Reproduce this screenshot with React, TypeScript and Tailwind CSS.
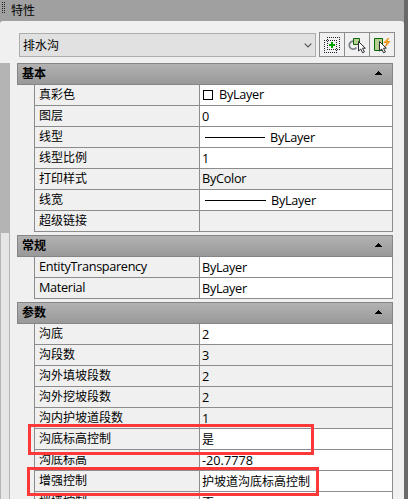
import type { ReactNode } from "react";

const LATIN = "text-[12.7px] font-['Open_Sans','Noto_Sans_CJK_SC',sans-serif]";

type Kind = "white" | "gray";
interface Item {
  label: string;
  value: string;
  kind?: Kind;
  latin?: boolean;
  cjk?: boolean;
  mark?: "box" | "line" | "longline";
}

function Row({ label, value, kind = "white", latin, cjk, mark }: Item) {
  const isWord = value.startsWith("By");
  return (
    <div className="flex h-[21px] shrink-0 border-b border-[#8c8c8c]">
      <div className="flex w-[166px] shrink-0 items-center border-x border-[#8c8c8c] pb-[2px] pl-1 leading-5">
        <span className={latin ? `${LATIN} tracking-[-0.33px]` : ""}>{label}</span>
      </div>
      <div
        className={`flex grow items-center border-r border-[#8c8c8c] pl-[2px] leading-5 ${
          kind === "white" ? "bg-white" : "bg-[#f0f0f0] pb-[2px]"
        } ${kind === "gray" && !isWord ? "pt-[2px]" : ""}`}
      >
        {mark === "box" && <span className="mr-[6px] ml-px size-[10px] border border-black" />}
        {mark === "line" && <span className="mr-[5px] ml-[3px] h-px w-[60px] bg-black" />}
        {mark === "longline" && <span className="mr-[5px] ml-[3px] h-px w-[61px] bg-black" />}
        <span
          className={`${cjk ? "" : LATIN} ${isWord ? "tracking-[-0.3px]" : ""} ${mark === "box" ? "pb-[2px]" : ""}`}
        >
          {value}
        </span>
      </div>
    </div>
  );
}

function Section({ title, items, className = "" }: { title: string; items: Item[]; className?: string }) {
  return (
    <section className={`shrink-0 ${className}`}>
      <header className="flex h-[22px] items-center justify-between border border-[#858585] bg-linear-to-b from-[#b2b2b2] to-[#999999] pr-[10px] pb-[2px] pl-1 font-bold">
        <span>{title}</span>
        <svg width="7" height="4" viewBox="0 0 7 4" shapeRendering="crispEdges">
          <path d="M3 0h1v1h1v1h1v1h1v1H0V3h1V2h1V1h1z" />
        </svg>
      </header>
      <div className="pl-[17px]">
        {items.map((item) => (
          <Row key={item.label} {...item} />
        ))}
      </div>
    </section>
  );
}

function ToolButton({ children, first = false }: { children: ReactNode; first?: boolean }) {
  return (
    <button
      className={`flex h-[25px] items-center justify-center border-y border-r border-[#8c8c8c] ${
        first ? "w-[26px] border-l" : "w-[25px]"
      }`}
    >
      {children}
    </button>
  );
}

function Cursor({ x, y }: { x: number; y: number }) {
  return (
    <path
      transform={`translate(${x} ${y})`}
      d="M.5.5v9.5l2.2-2 1.9 3.8 1.8-.9-1.9-3.7h2.8z"
      fill="#fff"
      stroke="#2b2b33"
    />
  );
}

function SelectIcon() {
  return (
    <svg width="24" height="23" viewBox="0 0 24 23" shapeRendering="crispEdges">
      <g fill="none" stroke="#223" strokeDasharray="1 1">
        <path d="M7 4.5h13M7 16.5h13M4 7.5h13M4 19.5h13" />
        <path d="M7.5 4v13M19.5 4v13M4.5 7v13M16.5 7v13" />
      </g>
      <path d="M11 9h2v2h2v2h-2v2h-2v-2H9v-2h2z" fill="#00a000" />
    </svg>
  );
}

function PickIcon() {
  return (
    <svg width="24" height="23" viewBox="0 0 24 23">
      <path d="M8 8.2a4 4 0 1 0 3.5 6.3" fill="none" stroke="#7c8288" strokeWidth="1.8" />
      <path d="M8.5 5.5h6v6h-6z" fill="#b8cf94" stroke="#0f640f" />
      <Cursor x={13} y={8} />
    </svg>
  );
}

function QuickIcon() {
  return (
    <svg width="24" height="23" viewBox="0 0 24 23">
      <path d="M4.5 5.5h8v12h-8z" fill="#b8cf94" stroke="#006b00" />
      <path d="M18.5 5L14 9.5h3.2l-1.7 4 4.3-5h-3z" fill="#ffc64a" stroke="#e98200" strokeWidth=".9" />
      <Cursor x={9} y={8} />
    </svg>
  );
}

const basic: Item[] = [
  { label: "真彩色", value: "ByLayer", mark: "box" },
  { label: "图层", value: "0" },
  { label: "线型", value: "ByLayer", mark: "line" },
  { label: "线型比例", value: "1" },
  { label: "打印样式", value: "ByColor", kind: "gray" },
  { label: "线宽", value: "ByLayer", mark: "longline" },
  { label: "超级链接", value: "", kind: "gray" },
];

const general: Item[] = [
  { label: "EntityTransparency", value: "ByLayer", latin: true },
  { label: "Material", value: "ByLayer", latin: true },
];

const params: Item[] = [
  { label: "沟底", value: "2" },
  { label: "沟段数", value: "3", kind: "gray" },
  { label: "沟外填坡段数", value: "2", kind: "gray" },
  { label: "沟外挖坡段数", value: "2", kind: "gray" },
  { label: "沟内护坡道段数", value: "1", kind: "gray" },
  { label: "沟底标高控制", value: "是", cjk: true },
  { label: "沟底标高", value: "-20.7778" },
  { label: "增强控制", value: "护坡道沟底标高控制", cjk: true },
  { label: "挡墙控制", value: "否", cjk: true },
];

export default function App() {
  return (
    <div className="relative flex h-[499px] w-[408px] overflow-hidden bg-[#a0a0a0] font-['Noto_Sans_CJK_SC',sans-serif] text-[12px] leading-5 text-black">
      <div className="flex w-[404px] shrink-0 flex-col">
        <div className="flex h-[21px] shrink-0 items-center pb-px pl-[2px]">
          <svg width="3" height="12" viewBox="0 0 3 12" shapeRendering="crispEdges" className="mb-[4px]">
            <path d="M.5 0v12M2.5 0v12" stroke="#222" strokeDasharray="1 1" />
          </svg>
          <span className="ml-[6px]">特性</span>
        </div>
        <div className="flex min-h-0 grow flex-col rounded-t-[3px] bg-[#f0f0f0]">
          <div className="flex h-[42px] shrink-0 items-start pt-[11px] pl-[19px]">
            <div className="mt-px flex h-6 w-[297px] shrink-0 items-center justify-between border border-[#adadad] bg-[#e1e1e1] pr-[3px] pl-[3px]">
              <span>排水沟</span>
              <svg width="8" height="5" viewBox="0 0 8 5" fill="none" stroke="#555" strokeWidth="1.2">
                <path d="M.7.6L4 4 7.3.6" />
              </svg>
            </div>
            <div className="ml-[3px] flex">
              <ToolButton first>
                <SelectIcon />
              </ToolButton>
              <ToolButton>
                <PickIcon />
              </ToolButton>
              <ToolButton>
                <QuickIcon />
              </ToolButton>
            </div>
          </div>
          <div className="flex min-h-0 grow">
            <div className="flex w-[10px] shrink-0 flex-col bg-[#b4b4b4] pt-[170px]">
              <div className="mx-px grow bg-[#e5e5e5]" />
            </div>
            <div className="ml-[7px] flex w-[376px] flex-col overflow-hidden">
              <Section title="基本" items={basic} />
              <Section title="常规" items={general} className="mt-[3px]" />
              <Section title="参数" items={params} className="mt-[3px]" />
            </div>
          </div>
        </div>
      </div>
      <div className="grow bg-[#696969]" />
      <div className="absolute top-[424px] left-[28px] h-[31px] w-[286px] border-3 border-[#fd3838]" />
      <div className="absolute top-[467px] left-[27px] h-[29px] w-[292px] border-3 border-[#fd3838]" />
    </div>
  );
}
